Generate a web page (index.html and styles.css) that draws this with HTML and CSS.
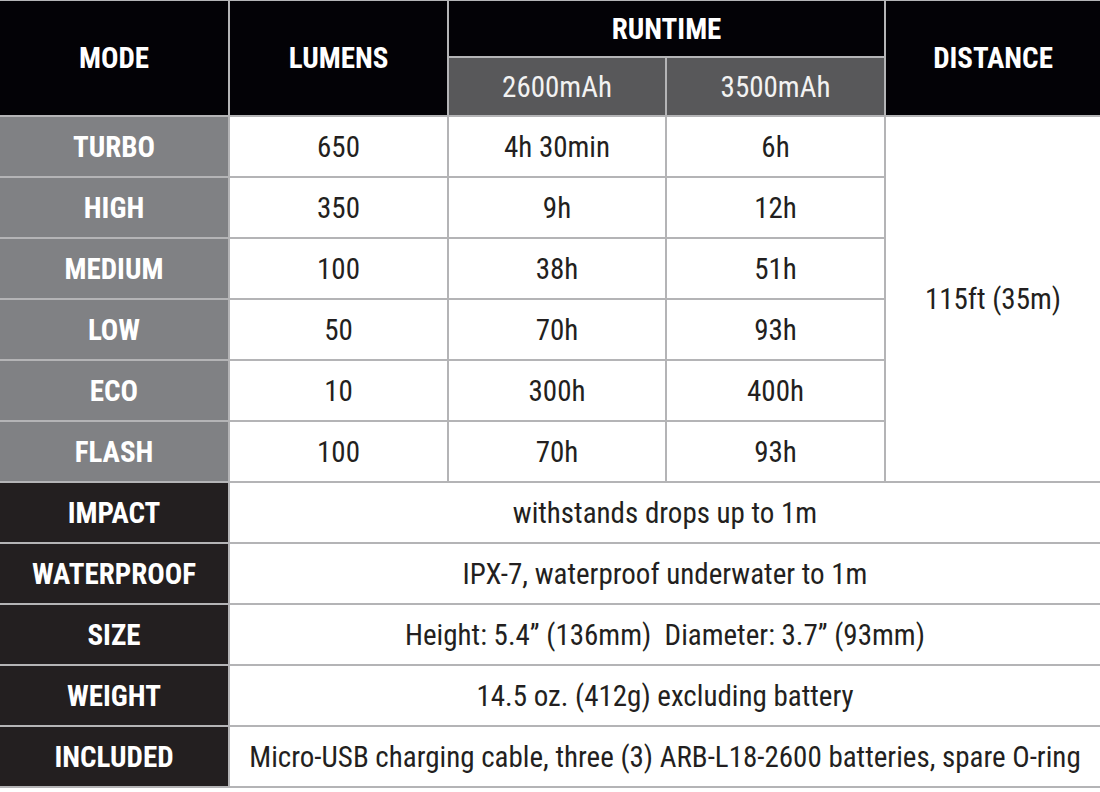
FILE: index.html
```html
<!DOCTYPE html>
<html>
<head>
<meta charset="utf-8">
<link rel="stylesheet" href="styles.css">
</head>
<body>
<div class="spec">
  <div class="cell head span-rows2">MODE</div>
  <div class="cell head span-rows2">LUMENS</div>
  <div class="cell head span-cols2">RUNTIME</div>
  <div class="cell head span-rows2">DISTANCE</div>
  <div class="cell sub">2600mAh</div>
  <div class="cell sub">3500mAh</div>

  <div class="cell mode">TURBO</div>
  <div class="cell val">650</div>
  <div class="cell val">4h 30min</div>
  <div class="cell val">6h</div>
  <div class="cell val dist">115ft (35m)</div>

  <div class="cell mode">HIGH</div>
  <div class="cell val">350</div>
  <div class="cell val">9h</div>
  <div class="cell val">12h</div>

  <div class="cell mode">MEDIUM</div>
  <div class="cell val">100</div>
  <div class="cell val">38h</div>
  <div class="cell val">51h</div>

  <div class="cell mode">LOW</div>
  <div class="cell val">50</div>
  <div class="cell val">70h</div>
  <div class="cell val">93h</div>

  <div class="cell mode">ECO</div>
  <div class="cell val">10</div>
  <div class="cell val">300h</div>
  <div class="cell val">400h</div>

  <div class="cell mode">FLASH</div>
  <div class="cell val">100</div>
  <div class="cell val">70h</div>
  <div class="cell val">93h</div>

  <div class="cell feat">IMPACT</div>
  <div class="cell val wide">withstands drops up to 1m</div>

  <div class="cell feat">WATERPROOF</div>
  <div class="cell val wide">IPX-7, waterproof underwater to 1m</div>

  <div class="cell feat">SIZE</div>
  <div class="cell val wide">Height: 5.4” (136mm)&nbsp; Diameter: 3.7” (93mm)</div>

  <div class="cell feat">WEIGHT</div>
  <div class="cell val wide">14.5 oz. (412g) excluding battery</div>

  <div class="cell feat">INCLUDED</div>
  <div class="cell val wide">Micro-USB charging cable, three (3) ARB-L18-2600 batteries, spare O-ring</div>
</div>
</body>
</html>
```
FILE: styles.css
```css
html, body {
  margin: 0;
  padding: 0;
  background: #ffffff;
}

.spec {
  width: 1100px;
  display: grid;
  grid-template-columns: 228px 217px 216px 217px 214px;
  grid-template-rows: 55px 57px repeat(11, 59px);
  gap: 2px;
  padding: 1px 0 2px 0;
  background: #b4b4b6;
  font-family: "Roboto", "Noto Sans", sans-serif;
  font-stretch: 81%;
}

.cell {
  display: flex;
  align-items: center;
  justify-content: center;
  text-align: center;
  white-space: nowrap;
}

.head {
  background: #030206;
  color: #ffffff;
  font-weight: bold;
  font-size: 29px;
  font-stretch: 83%;
}

.span-rows2 { grid-row: span 2; }
.span-cols2 { grid-column: span 2; }

.sub {
  background: #58585a;
  color: #f2f2f2;
  font-size: 29px;
}

.mode {
  background: #808184;
  color: #ffffff;
  font-weight: bold;
  font-size: 29px;
  font-stretch: 83%;
}

.feat {
  background: #231f20;
  color: #ffffff;
  font-weight: bold;
  font-size: 29px;
  font-stretch: 83%;
}

.val {
  background: #ffffff;
  color: #231f20;
  font-size: 29px;
}

.dist {
  grid-column: 5;
  grid-row: 3 / span 6;
}

.wide {
  grid-column: 2 / span 4;
}
```
